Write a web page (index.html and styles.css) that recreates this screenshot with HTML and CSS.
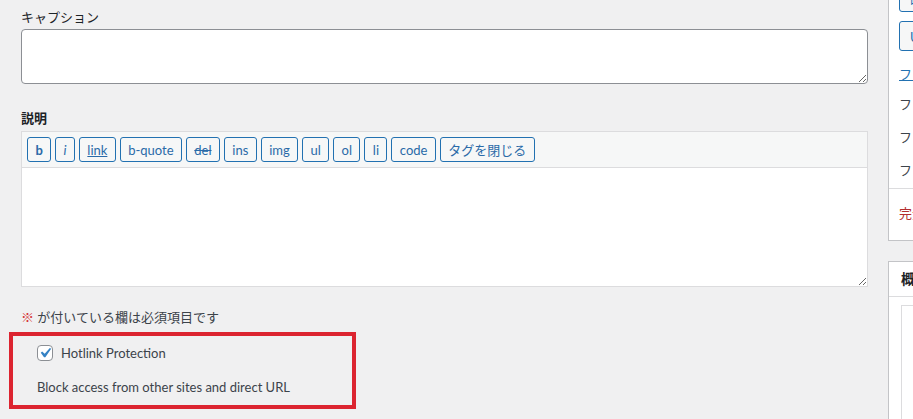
FILE: index.html
```html
<!DOCTYPE html>
<html lang="ja">
<head>
  <meta charset="UTF-8" />
  <meta name="viewport" content="width=device-width, initial-scale=1.0"/>
  <title>メディアを編集</title>
  <link rel="stylesheet" href="styles.css">
</head>
<body>
  <div class="wrap">
    <div class="main">
      <label class="field-label">キャプション</label>
      <textarea class="caption"></textarea>

      <label class="field-label strong">説明</label>
      <div class="editor">
        <div class="toolbar">
          <button class="qt b">b</button>
          <button class="qt i">i</button>
          <button class="qt link">link</button>
          <button class="qt">b-quote</button>
          <button class="qt del">del</button>
          <button class="qt">ins</button>
          <button class="qt">img</button>
          <button class="qt">ul</button>
          <button class="qt">ol</button>
          <button class="qt">li</button>
          <button class="qt">code</button>
          <button class="qt">タグを閉じる</button>
        </div>
        <textarea class="content"></textarea>
      </div>

      <p class="required"><span class="mark">※</span> が付いている欄は必須項目です</p>

      <div class="highlight">
        <label class="check">
          <span class="box">
            <svg viewBox="0 0 20 20" width="20" height="20"><path d="M14.83 4.89l1.34.94-5.81 8.38H9.02L5.78 9.67l1.34-1.25 2.57 2.4z"/></svg>
          </span>
          Hotlink Protection
        </label>
        <p class="desc">Block access from other sites and direct URL</p>
      </div>
    </div>

    <div class="side">
      <div class="panel save">
        <div class="inner">
          <button class="btn">画像を編集</button>
          <button class="btn">URL をクリップボードにコピー</button>
          <a class="row link-row" href="#">ファイルの URL</a>
          <div class="row">ファイル名: sample.jpg</div>
          <div class="row">ファイルタイプ: image/jpeg</div>
          <div class="row">ファイルサイズ: 120 KB</div>
        </div>
        <div class="actions">
          <a class="delete" href="#">完全に削除する</a>
        </div>
      </div>

      <div class="panel summary">
        <div class="head">概要</div>
        <div class="body">
          <div class="frame"></div>
        </div>
      </div>
    </div>
  </div>
</body>
</html>
```

FILE: styles.css
```css
html, body {
  margin: 0;
  height: 100%;
  overflow: hidden;
}
body {
  font-family: "Lato", "Noto Sans CJK JP", sans-serif;
  font-size: 13px;
  line-height: 1.4;
  color: #3c434a;
  background: #f0f0f1;
}
.wrap {
  display: flex;
  gap: 20px;
  padding-left: 21px;
}
.main {
  width: 847px;
  flex-shrink: 0;
  padding-top: 8px;
}
.field-label {
  display: block;
  line-height: 19px;
  margin-bottom: 2px;
  color: #1d2327;
}
.field-label.strong {
  font-weight: 600;
  margin-top: 25px;
  margin-bottom: 3px;
}
textarea {
  display: block;
  width: 100%;
  box-sizing: border-box;
  margin: 0;
  background: #fff;
  font: inherit;
}
.caption {
  height: 55px;
  border: 1px solid #8c8f94;
  border-radius: 4px;
}
.editor {
  border: 1px solid #dcdcde;
}
.toolbar {
  display: flex;
  gap: 4px;
  padding: 5px;
  background: #f6f7f7;
  border-bottom: 1px solid #dcdcde;
}
.qt {
  height: 25px;
  padding: 0 7.4px;
  font-family: inherit;
  font-size: 13px;
  color: #2a6aa8;
  background: #f6f7f7;
  border: 1px solid #2271b1;
  border-radius: 3px;
}
.qt.b { font-weight: 700; }
.qt.i { font-style: italic; }
.qt.link { text-decoration: underline; }
.qt.del { text-decoration: line-through; }
.content {
  height: 118px;
  border: 0;
  border-radius: 0;
}
.required {
  margin: 21px 0 0;
  line-height: 19px;
}
.mark {
  color: #d63638;
}
.highlight {
  margin: 5px 0 0 -12px;
  width: 347px;
  box-sizing: border-box;
  border: 4px solid #dc2430;
  padding: 8px 0 9px 24px;
}
.check {
  display: flex;
  align-items: center;
  gap: 8px;
  height: 18px;
}
.box {
  width: 16px;
  height: 16px;
  box-sizing: border-box;
  border: 1px solid #8c8f94;
  border-radius: 4px;
  background: #fff;
  display: flex;
  align-items: center;
  justify-content: center;
}
.box svg {
  fill: #3582c4;
  flex-shrink: 0;
}
.desc {
  margin: 16px 0 0;
  line-height: 18px;
}
.side {
  width: 280px;
  flex-shrink: 0;
}
.panel {
  background: #fff;
  border: 1px solid #c3c4c7;
}
.save {
  margin-top: -29px;
}
.save .inner {
  padding: 10px 10px 8px;
  display: flex;
  flex-direction: column;
  align-items: flex-start;
}
.btn {
  height: 30px;
  padding: 0 10px;
  font-family: inherit;
  font-size: 13px;
  color: #2271b1;
  background: #f6f7f7;
  border: 1px solid #2271b1;
  border-radius: 3px;
  margin-bottom: 9px;
}
.btn + .btn {
  margin-bottom: 0;
}
.row {
  line-height: 20px;
  margin-top: 13px;
  color: #3c434a;
}
.link-row {
  color: #2271b1;
  text-decoration: underline;
  margin-top: 13px;
}
.link-row + .row {
  margin-top: 10px;
}
.actions {
  border-top: 1px solid #dcdcde;
  padding: 14px 10px 17px;
  line-height: 20px;
}
.delete {
  color: #b32d2e;
  text-decoration: none;
}
.summary {
  margin-top: 20px;
}
.head {
  height: 34px;
  line-height: 34px;
  padding-left: 12px;
  font-size: 14px;
  font-weight: 600;
  color: #1d2327;
  border-bottom: 1px solid #dcdcde;
}
.summary .body {
  padding: 8px 12px 0;
}
.frame {
  height: 200px;
  border: 1px solid #dcdcde;
}
```
